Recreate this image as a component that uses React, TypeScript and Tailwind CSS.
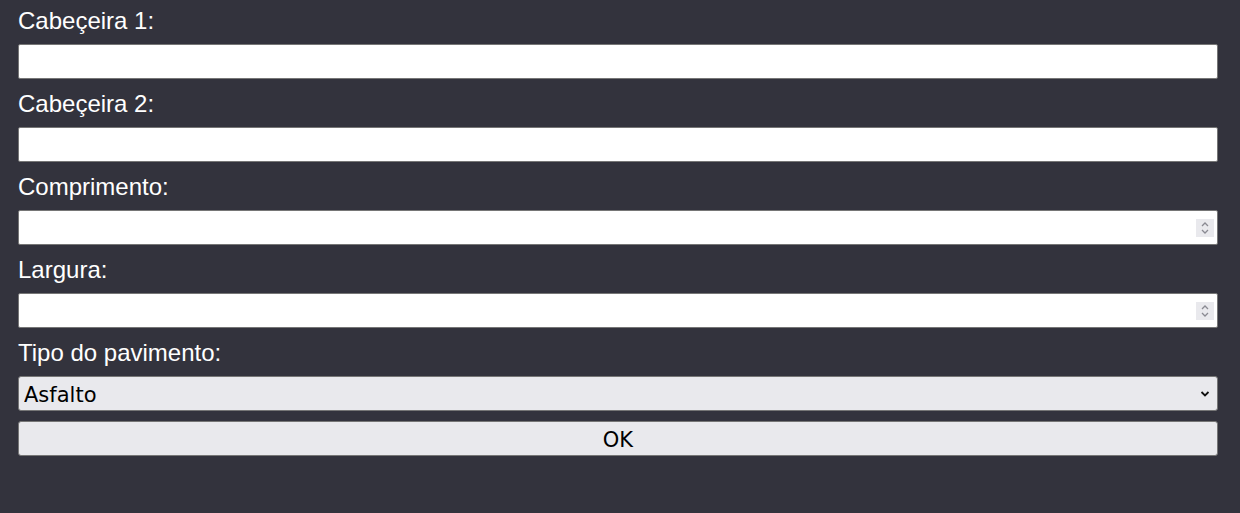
import React from "react";

const labelCls = "block text-[24px] leading-[22px] text-white font-['Liberation_Sans',Arial,sans-serif]";

function Spinner() {
  return (
    <div className="pointer-events-none absolute right-[4px] top-1/2 -translate-y-1/2 w-[18px] h-[18px] bg-[#e9e9ed] flex items-center justify-center">
      <svg width="10" height="14" viewBox="0 0 10 14" fill="none" stroke="#8a8a92" strokeWidth="1.3">
        <path d="M2 5 L5 2 L8 5" />
        <path d="M2 9 L5 12 L8 9" />
      </svg>
    </div>
  );
}

function Field({ label, number }: { label: string; number?: boolean }) {
  return (
    <div className="mb-[14px]">
      <label className={labelCls}>{label}</label>
      <div className="relative mt-[12px]">
        <input type="text" className="block w-full h-[35px] bg-white border border-[#767676] rounded-[2px] outline-none px-1" />
        {number && <Spinner />}
      </div>
    </div>
  );
}

export default function App() {
  return (
    <div className="min-h-screen bg-[#33333d] px-[18px] pt-[10px] pr-[22px]">
      <form onSubmit={(e) => e.preventDefault()}>
        <Field label="Cabeçeira 1:" />
        <Field label="Cabeçeira 2:" />
        <Field label="Comprimento:" number />
        <Field label="Largura:" number />

        <label className={labelCls}>Tipo do pavimento:</label>
        <div className="relative mt-[12px]">
          <select className="block w-full h-[35px] appearance-none bg-[#e9e9ed] border border-[#767676] rounded-[3px] pl-[5px] pt-[3px] text-[21px] leading-[26px] text-black font-['DejaVu_Sans',Verdana,sans-serif] outline-none">
            <option>Asfalto</option>
            <option>Concreto</option>
            <option>Grama</option>
            <option>Terra</option>
          </select>
          <svg className="pointer-events-none absolute right-[8px] top-1/2 -translate-y-1/2" width="10" height="7" viewBox="0 0 10 7" fill="none" stroke="#111" strokeWidth="1.8">
            <path d="M1.5 1.5 L5 5 L8.5 1.5" />
          </svg>
        </div>

        <button type="submit" className="mt-[10px] block w-full h-[35px] bg-[#e9e9ed] border border-[#767676] rounded-[3px] pt-[3px] text-[21px] leading-[26px] text-black font-['DejaVu_Sans',Verdana,sans-serif]">
          OK
        </button>
      </form>
    </div>
  );
}
